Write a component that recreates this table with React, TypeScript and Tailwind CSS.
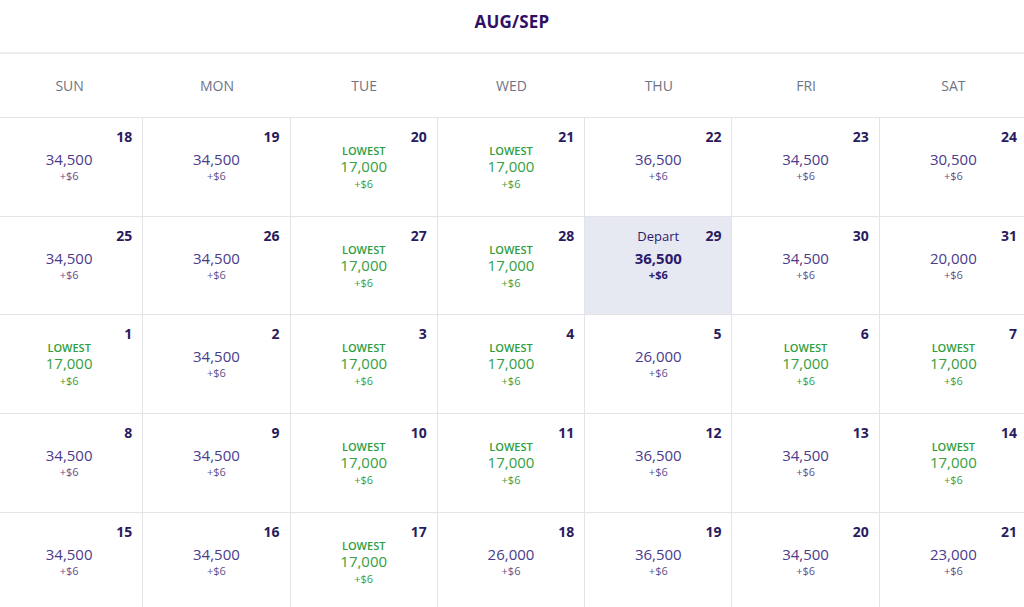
import React from 'react';

type Day = {
  day: number;
  price: string;
  lowest?: boolean;
  depart?: boolean;
};

const DAY_NAMES = ['SUN', 'MON', 'TUE', 'WED', 'THU', 'FRI', 'SAT'];

const WEEKS: Day[][] = [
  [
    { day: 18, price: '34,500' },
    { day: 19, price: '34,500' },
    { day: 20, price: '17,000', lowest: true },
    { day: 21, price: '17,000', lowest: true },
    { day: 22, price: '36,500' },
    { day: 23, price: '34,500' },
    { day: 24, price: '30,500' },
  ],
  [
    { day: 25, price: '34,500' },
    { day: 26, price: '34,500' },
    { day: 27, price: '17,000', lowest: true },
    { day: 28, price: '17,000', lowest: true },
    { day: 29, price: '36,500', depart: true },
    { day: 30, price: '34,500' },
    { day: 31, price: '20,000' },
  ],
  [
    { day: 1, price: '17,000', lowest: true },
    { day: 2, price: '34,500' },
    { day: 3, price: '17,000', lowest: true },
    { day: 4, price: '17,000', lowest: true },
    { day: 5, price: '26,000' },
    { day: 6, price: '17,000', lowest: true },
    { day: 7, price: '17,000', lowest: true },
  ],
  [
    { day: 8, price: '34,500' },
    { day: 9, price: '34,500' },
    { day: 10, price: '17,000', lowest: true },
    { day: 11, price: '17,000', lowest: true },
    { day: 12, price: '36,500' },
    { day: 13, price: '34,500' },
    { day: 14, price: '17,000', lowest: true },
  ],
  [
    { day: 15, price: '34,500' },
    { day: 16, price: '34,500' },
    { day: 17, price: '17,000', lowest: true },
    { day: 18, price: '26,000' },
    { day: 19, price: '36,500' },
    { day: 20, price: '34,500' },
    { day: 21, price: '23,000' },
  ],
];

function DayCell({ d, last }: { d: Day; last: boolean }) {
  return (
    <div
      className={
        'relative h-[98.7px] border-t border-[#e4e4e8] flex flex-col items-center justify-center ' +
        (last ? '' : 'border-r ') +
        (d.depart ? 'bg-[#e6e8f2]' : 'bg-white')
      }
    >
      <span className="absolute top-[9px] right-[10px] text-[14px] leading-[19px] font-bold text-[#2a1a5e]">
        {d.day}
      </span>

      {d.depart ? (
        <>
          <span className="absolute top-[10px] left-0 right-0 text-center text-[13px] leading-[18px] text-[#2d1a6b]">
            Depart
          </span>
          <span className="text-[15px] leading-[20px] font-bold text-[#2d1a6b] mt-[-2px]">{d.price}</span>
          <span className="text-[11px] leading-[14px] font-bold text-[#2d1a6b]">+$6</span>
        </>
      ) : d.lowest ? (
        <>
          <span className="text-[11px] leading-[14px] font-semibold text-[#2e9e3c] mt-[2px]">LOWEST</span>
          <span className="text-[15px] leading-[17px] text-[#34a03f]">{d.price}</span>
          <span className="text-[11px] leading-[17px] text-[#34a03f]">+$6</span>
        </>
      ) : (
        <>
          <span className="text-[15px] leading-[20px] text-[#4a3b8c] mt-[-2px]">{d.price}</span>
          <span className="text-[11px] leading-[14px] text-[#5e4f8e]">+$6</span>
        </>
      )}
    </div>
  );
}

export default function App() {
  return (
    <div
      className="w-[1024px] h-[607px] overflow-hidden bg-white"
      style={{ fontFamily: '"Open Sans", "Liberation Sans", sans-serif' }}
    >
      {/* Month title */}
      <div className="h-[54px] flex items-center justify-center border-b-2 border-[#ececef]">
        <h1 className="text-[17px] font-bold text-[#2d1065] tracking-[0.2px] mb-[8px]">AUG/SEP</h1>
      </div>

      <div className="w-[1031px] ml-[-4px]">
        {/* Weekday names */}
        <div className="grid grid-cols-7 h-[63px]">
          {DAY_NAMES.map((name) => (
            <div key={name} className="flex items-center justify-center text-[14px] text-[#6f7384]">
              {name}
            </div>
          ))}
        </div>

        {/* Weeks */}
        {WEEKS.map((week, wi) => (
          <div key={wi} className="grid grid-cols-7">
            {week.map((d, i) => (
              <DayCell key={i} d={d} last={i === 6} />
            ))}
          </div>
        ))}
      </div>
    </div>
  );
}
